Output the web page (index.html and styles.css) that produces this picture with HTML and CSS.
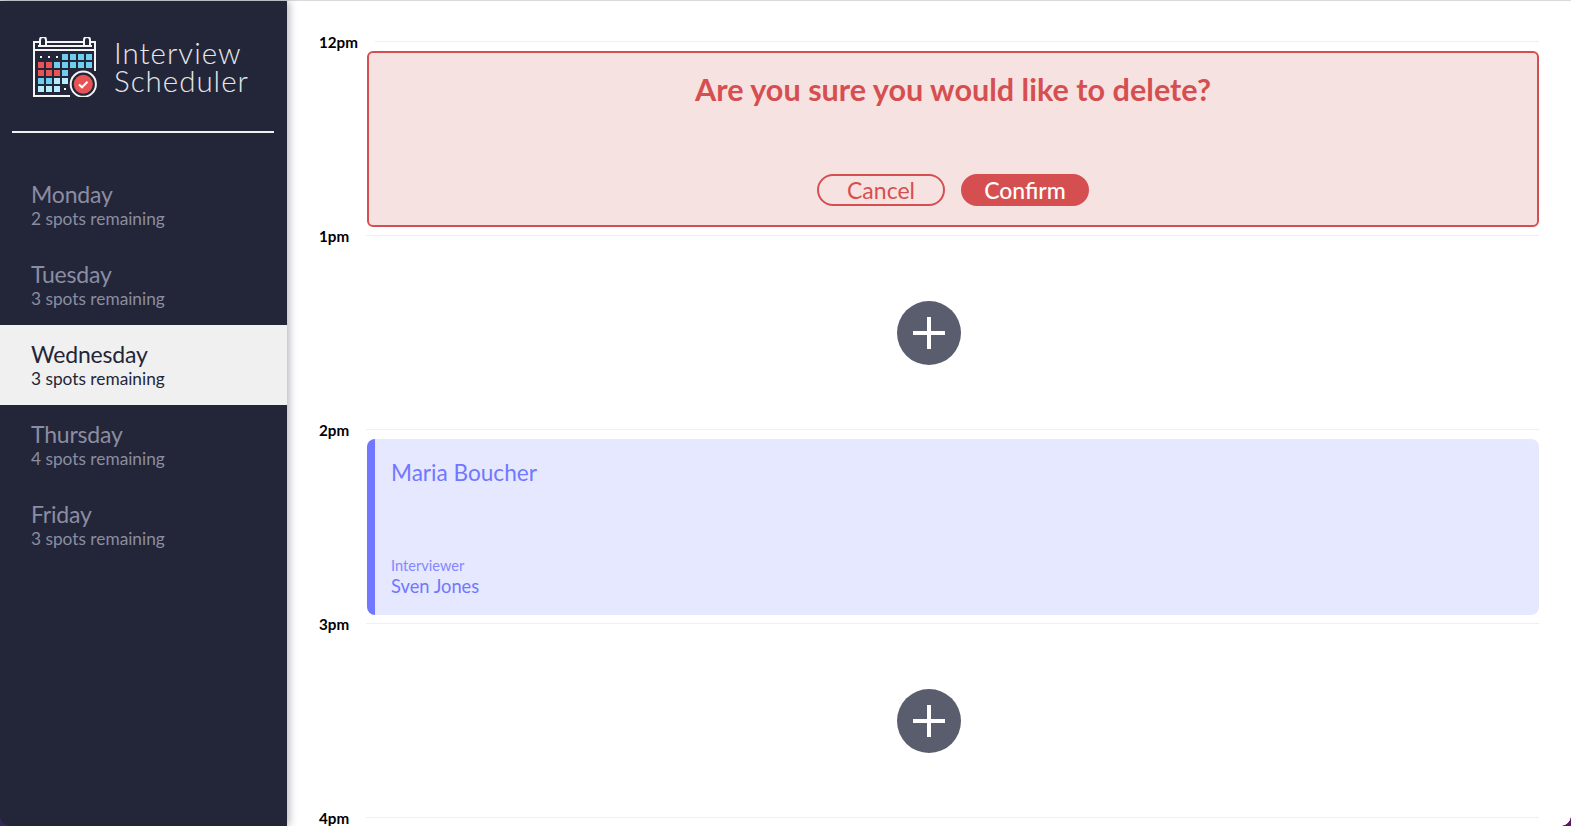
FILE: index.html
```html
<!DOCTYPE html>
<html lang="en">
  <head>
    <meta http-equiv="Content-Type" content="text/html;charset=UTF-8" />
    <meta name="viewport" content="width=device-width, initial-scale=1.0" />
    <title>Interview Scheduler</title>
    <link rel="stylesheet" href="styles.css">
  </head>
  <body>
    <div class="layout">
      <nav class="sidebar">
        <div class="brand">
          <svg class="brandIcon" width="64" height="60" viewBox="33 37 64 60">
            <g fill="none" stroke="#f4f4f6" stroke-width="2">
              <path d="M95 71V42H91M83 42H47M39 42H34V96H70" />
              <path d="M38 46H92M34 50H96" />
              <path d="M40 45V40a3 3 0 0 1 6 0V45M84 45V40a3 3 0 0 1 6 0V45" />
              <circle cx="83.3" cy="84.2" r="12.6" />
            </g>
            <g fill="#f4f4f6">
              <rect x="40" y="56" width="2" height="2" />
              <rect x="48" y="56" width="2" height="2" />
              <rect x="56" y="56" width="2" height="2" />
              <rect x="64" y="88" width="2" height="2" />
            </g>
            <g fill="#e85454">
              <rect x="38" y="62" width="6" height="6" />
              <rect x="46" y="62" width="6" height="6" />
              <rect x="38" y="70" width="6" height="6" />
              <rect x="46" y="70" width="6" height="6" />
              <rect x="54" y="70" width="6" height="6" />
              <circle cx="83.3" cy="84.2" r="9.5" />
            </g>
            <g fill="#6fcdf0">
              <rect x="62" y="54" width="6" height="6" />
              <rect x="70" y="54" width="6" height="6" />
              <rect x="78" y="54" width="6" height="6" />
              <rect x="86" y="54" width="6" height="6" />
              <rect x="54" y="62" width="6" height="6" />
              <rect x="62" y="62" width="6" height="6" />
              <rect x="70" y="62" width="6" height="6" />
              <rect x="78" y="62" width="6" height="6" />
              <rect x="86" y="62" width="6" height="6" />
              <rect x="62" y="70" width="6" height="6" />
              <rect x="38" y="78" width="6" height="6" />
              <rect x="46" y="78" width="6" height="6" />
            </g>
            <g fill="#b4ecfb">
              <rect x="54" y="78" width="6" height="6" />
              <rect x="62" y="78" width="6" height="6" />
              <rect x="38" y="86" width="6" height="6" />
              <rect x="46" y="86" width="6" height="6" />
              <rect x="54" y="86" width="6" height="6" />
            </g>
            <path d="M79 84.5l3 2.8 5.5-5.5" fill="none" stroke="#fff" stroke-width="2" />
          </svg>
          <div class="brandName">Interview<br>Scheduler</div>
        </div>
        <hr class="brandLine">
        <ul class="dayList">
          <li class="dayItem"><h2>Monday</h2><p>2 spots remaining</p></li>
          <li class="dayItem"><h2>Tuesday</h2><p>3 spots remaining</p></li>
          <li class="dayItem dayItemSelected"><h2>Wednesday</h2><p>3 spots remaining</p></li>
          <li class="dayItem"><h2>Thursday</h2><p>4 spots remaining</p></li>
          <li class="dayItem"><h2>Friday</h2><p>3 spots remaining</p></li>
        </ul>
      </nav>

      <main class="schedule">
        <article class="slot">
          <header class="slotTime"><span>12pm</span><hr></header>
          <section class="confirmCard">
            <h1>Are you sure you would like to delete?</h1>
            <div class="confirmActions">
              <button type="button" class="btn btnCancel">Cancel</button>
              <button type="button" class="btn btnConfirm">Confirm</button>
            </div>
          </section>
        </article>

        <article class="slot">
          <header class="slotTime"><span>1pm</span><hr></header>
          <div class="slotAdd">
            <button type="button" class="addBtn" aria-label="Add"></button>
          </div>
        </article>

        <article class="slot">
          <header class="slotTime"><span>2pm</span><hr></header>
          <section class="showCard">
            <h2>Maria Boucher</h2>
            <div>
              <p class="showLabel">Interviewer</p>
              <p class="showName">Sven Jones</p>
            </div>
          </section>
        </article>

        <article class="slot">
          <header class="slotTime"><span>3pm</span><hr></header>
          <div class="slotAdd">
            <button type="button" class="addBtn" aria-label="Add"></button>
          </div>
        </article>

        <article class="slot">
          <header class="slotTime"><span>4pm</span><hr></header>
        </article>
      </main>
    </div>
    <div class="corner cornerLeft"></div>
    <div class="corner cornerRight"></div>
  </body>
</html>
```

FILE: styles.css
```css
* {
  box-sizing: border-box;
}

html,
body {
  height: 100%;
}

body {
  margin: 0;
  background-color: #fff;
  font-family: "Lato", "Noto Sans", sans-serif;
  overflow: hidden;
  position: relative;
}

h1,
h2,
p,
ul {
  margin: 0;
  padding: 0;
}

.layout {
  display: flex;
  height: 100%;
  border-top: 1px solid #d8d8dd;
}

/* Sidebar */
.sidebar {
  width: 287px;
  flex-shrink: 0;
  background-color: #232638;
  box-shadow: 2px 0 8px rgba(34, 36, 55, 0.35);
  z-index: 1;
}

.brand {
  display: flex;
  align-items: center;
  gap: 17px;
  padding: 28px 0 0 33px;
  height: 104px;
}

.brandIcon {
  flex-shrink: 0;
}

.brandName {
  color: #e6e6ea;
  font-size: 29.5px;
  font-weight: 300;
  line-height: 28px;
  letter-spacing: 1px;
}

.brandLine {
  margin: 26px 13px 32px 12px;
  height: 2px;
  border: 0;
  background-color: #f0f0f0;
}

.dayList {
  list-style: none;
}

.dayItem {
  height: 80px;
  padding: 16px 0 0 31px;
  color: #8b8da3;
}

.dayItem h2 {
  font-size: 23px;
  font-weight: 400;
  line-height: 27px;
  letter-spacing: -0.2px;
}

.dayItem p {
  font-size: 17.3px;
  font-weight: 400;
  line-height: 22px;
}

.dayItemSelected {
  background-color: #f0f0f0;
  color: #232638;
}

/* Schedule */
.schedule {
  flex: 1;
  overflow: hidden;
  padding: 40px 32px 0 32px;
}

.slot {
  height: 194px;
}

.slotTime {
  display: flex;
  height: 10px;
}

.slotTime span {
  margin-top: -9px;
  font-size: 15.2px;
  font-weight: 700;
  line-height: 20px;
  color: #000;
}

.slotTime hr {
  flex: 1;
  height: 1px;
  margin: 0 0 0 17px;
  border: 0;
  background-color: #efefef;
}

.confirmCard {
  display: flex;
  flex-direction: column;
  justify-content: space-between;
  height: 176px;
  margin-left: 48px;
  padding: 18px 0 19px;
  background-color: #f7e2e2;
  border: 2px solid #d64f50;
  border-radius: 6px;
  text-align: center;
  color: #d64f50;
}

.confirmCard h1 {
  font-size: 30.6px;
  font-weight: 700;
  line-height: 38px;
}

.confirmActions {
  display: flex;
  justify-content: center;
  gap: 16px;
}

.btn {
  width: 128px;
  height: 32px;
  padding: 0;
  border: 2px solid #d64f50;
  border-radius: 16px;
  font-family: inherit;
  font-size: 23px;
  line-height: 26px;
}

.btnCancel {
  background-color: transparent;
  color: #d64f50;
}

.btnConfirm {
  background-color: #d64f50;
  color: #fff;
  font-weight: 500;
}

.slotAdd {
  display: flex;
  justify-content: center;
  padding-top: 56px;
}

.addBtn {
  position: relative;
  width: 64px;
  height: 64px;
  padding: 0;
  border: 0;
  border-radius: 50%;
  background-color: #5a5d6d;
}

.addBtn::before,
.addBtn::after {
  content: "";
  position: absolute;
  background-color: #fff;
}

.addBtn::before {
  left: 16px;
  top: 30px;
  width: 32px;
  height: 4px;
}

.addBtn::after {
  left: 30px;
  top: 16px;
  width: 4px;
  height: 32px;
}

.showCard {
  display: flex;
  flex-direction: column;
  justify-content: space-between;
  height: 176px;
  margin-left: 48px;
  padding: 19px 16px 18px 16px;
  background-color: #e5e8ff;
  border-left: 8px solid #7277ff;
  border-radius: 8px;
  color: #7277ff;
}

.showCard h2 {
  font-size: 22.6px;
  font-weight: 400;
  line-height: 30px;
}

.showLabel {
  font-size: 14.6px;
  font-weight: 400;
  line-height: 18px;
  opacity: 0.85;
}

.showName {
  font-size: 18.3px;
  line-height: 22px;
}

/* Window corners showing through at the bottom */
.corner {
  position: absolute;
  bottom: 0;
  width: 10px;
  height: 10px;
}

.cornerLeft {
  left: 0;
  z-index: 2;
  background: radial-gradient(circle at 100% 0, transparent 9.5px, #33265c 10px);
}

.cornerRight {
  right: 0;
  background: radial-gradient(circle at 0 0, transparent 9.5px, #5c1a5c 10px);
}
```
